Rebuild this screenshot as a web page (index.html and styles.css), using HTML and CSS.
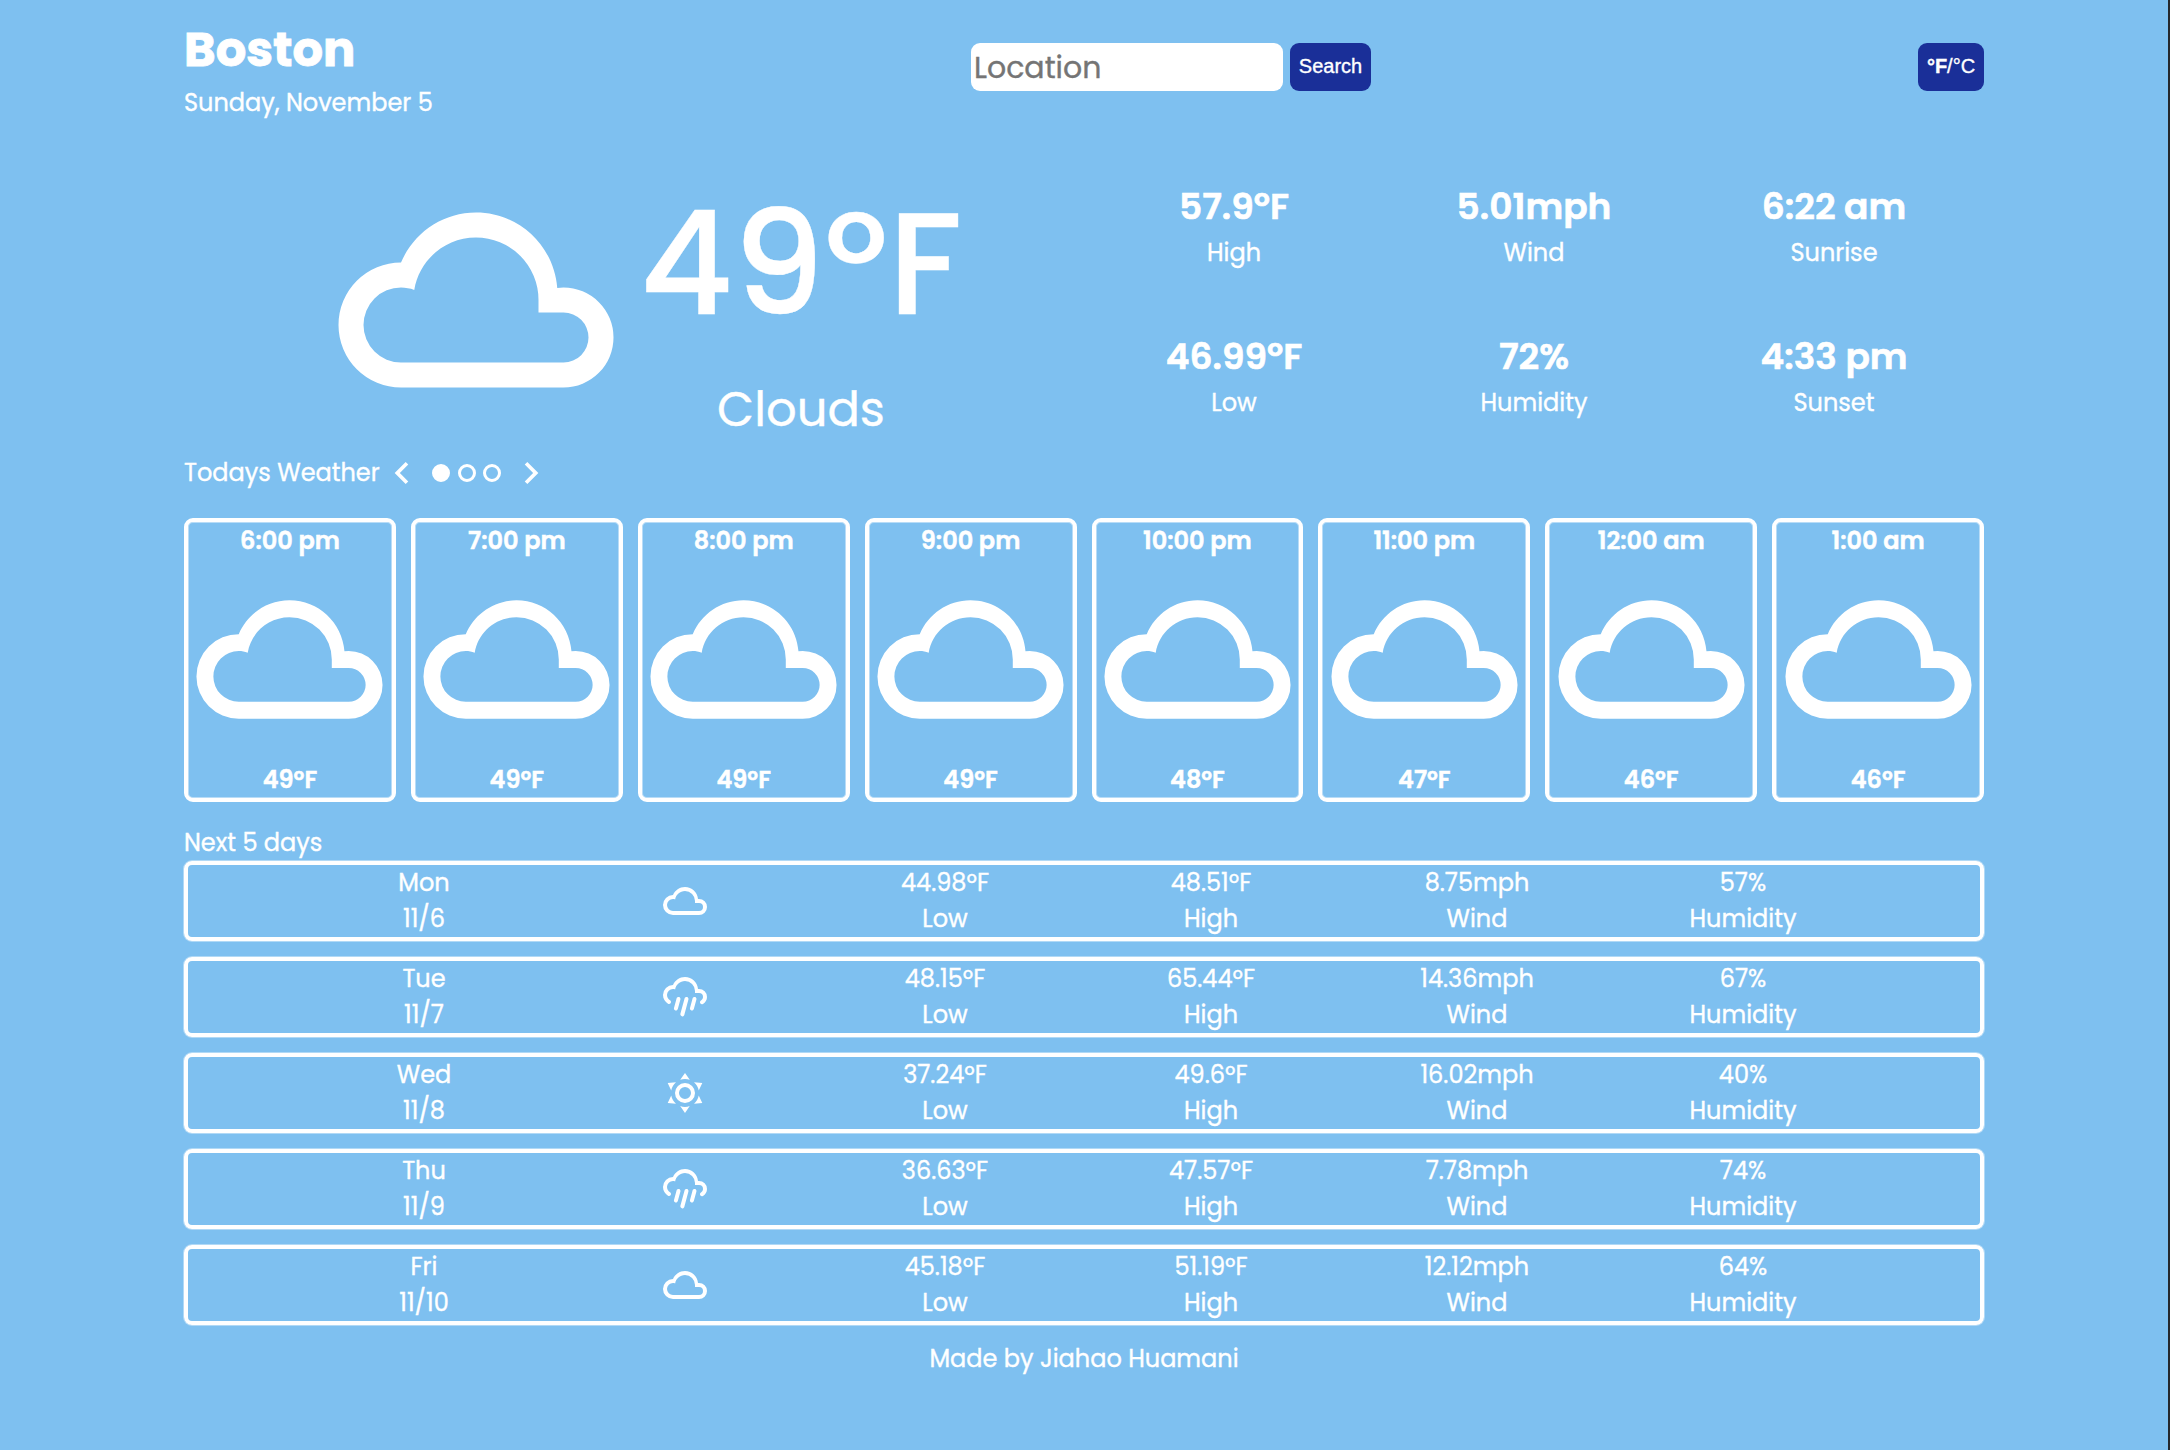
FILE: index.html
```html
<!DOCTYPE html>
<html lang="en">
<head>
<meta charset="utf-8">
<title>Weather</title>
<link rel="stylesheet" href="styles.css">
</head>
<body>
<svg class="sprite" aria-hidden="true">
  <symbol id="cloudy" viewBox="0 0 24 24"><path d="M6,19A5,5 0 0,1 1,14A5,5 0 0,1 6,9C7,6.65 9.3,5 12,5C15.43,5 18.24,7.66 18.5,11.03L19,11A4,4 0 0,1 23,15A4,4 0 0,1 19,19H6M19,13H17V12A5,5 0 0,0 12,7C9.5,7 7.45,8.82 7.06,11.19C6.73,11.07 6.37,11 6,11A3,3 0 0,0 3,14A3,3 0 0,0 6,17H19A2,2 0 0,0 21,15A2,2 0 0,0 19,13Z"/></symbol>
  <symbol id="sunny" viewBox="0 0 24 24"><path d="M12,7A5,5 0 0,1 17,12A5,5 0 0,1 12,17A5,5 0 0,1 7,12A5,5 0 0,1 12,7M12,9A3,3 0 0,0 9,12A3,3 0 0,0 12,15A3,3 0 0,0 15,12A3,3 0 0,0 12,9M12,2L14.39,5.42C13.65,5.15 12.84,5 12,5C11.16,5 10.35,5.15 9.61,5.42L12,2M3.34,7L7.5,6.65C6.9,7.16 6.36,7.78 5.94,8.5C5.5,9.24 5.25,10 5.11,10.79L3.34,7M3.36,17L5.12,13.23C5.26,14 5.53,14.78 5.95,15.5C6.37,16.24 6.91,16.86 7.5,17.37L3.36,17M20.65,7L18.88,10.79C18.74,10 18.47,9.23 18.05,8.5C17.63,7.78 17.1,7.15 16.5,6.64L20.65,7M20.64,17L16.5,17.36C17.09,16.85 17.62,16.22 18.04,15.5C18.46,14.77 18.73,14 18.87,13.21L20.64,17M12,22L9.59,18.56C10.33,18.83 11.14,19 12,19C12.82,19 13.63,18.83 14.37,18.56L12,22Z"/></symbol>
  <symbol id="pouring" viewBox="0 0 24 24"><path d="M9,12C9.53,12.14 9.85,12.69 9.71,13.22L8.41,18.05C8.27,18.59 7.72,18.9 7.19,18.76C6.65,18.62 6.34,18.07 6.5,17.54L7.78,12.71C7.92,12.17 8.47,11.86 9,12M13,12C13.53,12.14 13.85,12.69 13.71,13.22L11.64,20.95C11.5,21.5 10.95,21.8 10.41,21.66C9.88,21.5 9.56,20.97 9.7,20.43L11.78,12.71C11.92,12.17 12.47,11.86 13,12M17,12C17.53,12.14 17.85,12.69 17.71,13.22L16.41,18.05C16.27,18.59 15.72,18.9 15.19,18.76C14.65,18.62 14.34,18.07 14.5,17.54L15.78,12.71C15.92,12.17 16.47,11.86 17,12M17,10V9A5,5 0 0,0 12,4C9.5,4 7.45,5.82 7.06,8.19C6.73,8.07 6.37,8 6,8A3,3 0 0,0 3,11C3,12.11 3.6,13.08 4.5,13.6V13.59C5,13.87 5.14,14.5 4.87,14.96C4.59,15.43 4,15.6 3.5,15.32V15.33C2,14.47 1,12.85 1,11A5,5 0 0,1 6,6C7,3.65 9.3,2 12,2C15.43,2 18.24,4.66 18.5,8.03L19,8A4,4 0 0,1 23,12C23,13.5 22.2,14.77 21,15.46V15.46C20.5,15.73 19.91,15.57 19.63,15.09C19.36,14.61 19.5,14 20,13.72V13.72C20.6,13.37 21,12.73 21,12A2,2 0 0,0 19,10H17Z"/></symbol>
</svg>
<div class="page">
  <header class="header">
    <div class="place">
      <h1 class="city">Boston</h1>
      <p class="date">Sunday, November 5</p>
    </div>
    <form class="search">
      <input class="search-input" type="text" placeholder="Location">
      <button class="button" type="button">Search</button>
    </form>
    <button class="button unit" type="button"><b>°F</b>/°C</button>
  </header>

  <main>
    <section class="current">
      <div class="now">
        <svg class="now-icon"><use href="#cloudy"/></svg>
        <div class="now-text">
          <p class="now-temp">49ºF</p>
          <p class="now-sky">Clouds</p>
        </div>
      </div>
      <div class="stats">
        <div class="stat"><p class="stat-value">57.9ºF</p><p>High</p></div>
        <div class="stat"><p class="stat-value">5.01mph</p><p>Wind</p></div>
        <div class="stat"><p class="stat-value">6:22 am</p><p>Sunrise</p></div>
        <div class="stat"><p class="stat-value">46.99ºF</p><p>Low</p></div>
        <div class="stat"><p class="stat-value">72%</p><p>Humidity</p></div>
        <div class="stat"><p class="stat-value">4:33 pm</p><p>Sunset</p></div>
      </div>
    </section>

    <section class="today">
      <div class="today-bar">
        <h2 class="heading today-title">Todays Weather</h2>
        <svg class="chevron" viewBox="0 0 24 24"><path d="M15.41,16.58L10.83,12L15.41,7.41L14,6L8,12L14,18L15.41,16.58Z"/></svg>
        <div class="dots"><span class="dot dot-on"></span><span class="dot"></span><span class="dot"></span></div>
        <svg class="chevron" viewBox="0 0 24 24"><path d="M8.59,16.58L13.17,12L8.59,7.41L10,6L16,12L10,18L8.59,16.58Z"/></svg>
      </div>
      <div class="hours">
        <article class="hour"><p>6:00 pm</p><svg class="hour-icon"><use href="#cloudy"/></svg><p>49ºF</p></article>
        <article class="hour"><p>7:00 pm</p><svg class="hour-icon"><use href="#cloudy"/></svg><p>49ºF</p></article>
        <article class="hour"><p>8:00 pm</p><svg class="hour-icon"><use href="#cloudy"/></svg><p>49ºF</p></article>
        <article class="hour"><p>9:00 pm</p><svg class="hour-icon"><use href="#cloudy"/></svg><p>49ºF</p></article>
        <article class="hour"><p>10:00 pm</p><svg class="hour-icon"><use href="#cloudy"/></svg><p>48ºF</p></article>
        <article class="hour"><p>11:00 pm</p><svg class="hour-icon"><use href="#cloudy"/></svg><p>47ºF</p></article>
        <article class="hour"><p>12:00 am</p><svg class="hour-icon"><use href="#cloudy"/></svg><p>46ºF</p></article>
        <article class="hour"><p>1:00 am</p><svg class="hour-icon"><use href="#cloudy"/></svg><p>46ºF</p></article>
      </div>
    </section>

    <section class="week">
      <h2 class="heading">Next 5 days</h2>
      <div class="days">
        <article class="day">
          <div class="day-name"><p>Mon</p><p>11/6</p></div>
          <svg class="day-icon"><use href="#cloudy"/></svg>
          <div class="day-stats">
            <div><p>44.98ºF</p><p>Low</p></div><div><p>48.51ºF</p><p>High</p></div><div><p>8.75mph</p><p>Wind</p></div><div><p>57%</p><p>Humidity</p></div>
          </div>
        </article>
        <article class="day">
          <div class="day-name"><p>Tue</p><p>11/7</p></div>
          <svg class="day-icon"><use href="#pouring"/></svg>
          <div class="day-stats">
            <div><p>48.15ºF</p><p>Low</p></div><div><p>65.44ºF</p><p>High</p></div><div><p>14.36mph</p><p>Wind</p></div><div><p>67%</p><p>Humidity</p></div>
          </div>
        </article>
        <article class="day">
          <div class="day-name"><p>Wed</p><p>11/8</p></div>
          <svg class="day-icon"><use href="#sunny"/></svg>
          <div class="day-stats">
            <div><p>37.24ºF</p><p>Low</p></div><div><p>49.6ºF</p><p>High</p></div><div><p>16.02mph</p><p>Wind</p></div><div><p>40%</p><p>Humidity</p></div>
          </div>
        </article>
        <article class="day">
          <div class="day-name"><p>Thu</p><p>11/9</p></div>
          <svg class="day-icon"><use href="#pouring"/></svg>
          <div class="day-stats">
            <div><p>36.63ºF</p><p>Low</p></div><div><p>47.57ºF</p><p>High</p></div><div><p>7.78mph</p><p>Wind</p></div><div><p>74%</p><p>Humidity</p></div>
          </div>
        </article>
        <article class="day">
          <div class="day-name"><p>Fri</p><p>11/10</p></div>
          <svg class="day-icon"><use href="#cloudy"/></svg>
          <div class="day-stats">
            <div><p>45.18ºF</p><p>Low</p></div><div><p>51.19ºF</p><p>High</p></div><div><p>12.12mph</p><p>Wind</p></div><div><p>64%</p><p>Humidity</p></div>
          </div>
        </article>
      </div>
    </section>
  </main>
  <footer class="footer">Made by Jiahao Huamani</footer>
</div>
</body>
</html>
```
FILE: styles.css
```css
* {
  box-sizing: border-box;
  margin: 0;
  padding: 0;
}

body {
  min-height: 1450px;
  background: #7ec0f0;
  border-right: 2px solid #24282c;
  color: #fff;
  font: 400 24px/36px "Poppins", "Inter", "Open Sans", sans-serif;
  font-feature-settings: "cv11";
  -webkit-text-stroke: 0.35px currentColor;
  overflow: hidden;
}

svg {
  display: block;
  fill: currentColor;
}

.sprite {
  display: none;
}

.page {
  width: 1800px;
  margin: 0 auto;
  padding-top: 13px;
}

/* Header */
.header {
  display: grid;
  grid-template-columns: 787px 1fr auto;
  align-items: center;
  height: 108px;
}

.city {
  padding-top: 1px;
  font-size: 48px;
  font-weight: 700;
  line-height: 71px;
  -webkit-text-stroke-width: 0.8px;
}

.search {
  display: flex;
  gap: 7px;
}

.search-input {
  width: 312px;
  height: 48px;
  padding: 2px 3px 0;
  border: 0;
  border-radius: 9px;
  background: #fff;
  font: inherit;
  font-size: 30px;
  font-feature-settings: inherit;
}

.search-input::placeholder {
  color: #757575;
}

.button {
  width: 81px;
  height: 48px;
  padding-bottom: 2px;
  border: 0;
  border-radius: 9px;
  background: #1a2f98;
  color: #fff;
  font: 400 20px/24px "Liberation Sans", Arial, sans-serif;
}

.unit {
  width: 66px;
}

/* Current conditions */
.current {
  display: grid;
  grid-template-columns: 1fr 1fr;
  height: 300px;
  margin-top: 29px;
}

.now {
  display: flex;
  padding-left: 142px;
}

.now-icon {
  width: 300px;
  height: 300px;
}

.now-text {
  width: 350px;
  padding-top: 6px;
  text-align: center;
}

.now-temp {
  font-size: 144px;
  font-weight: 500;
  line-height: 216px;
}

.now-sky {
  padding-top: 2px;
  font-size: 48px;
  line-height: 72px;
}

.stats {
  display: grid;
  grid-template-columns: repeat(3, 1fr);
  grid-template-rows: 150px 150px;
}

.stat {
  padding-top: 30px;
  text-align: center;
}

.stat-value {
  margin-bottom: 1px;
  font-size: 36px;
  font-weight: 600;
  line-height: 54px;
  -webkit-text-stroke-width: 0.6px;
}

/* Hourly forecast */
.heading {
  font-size: 24px;
  font-weight: 400;
}

.today-bar {
  display: flex;
  align-items: center;
  height: 46px;
}

.today-title {
  width: 196px;
  white-space: nowrap;
}

.chevron {
  width: 44px;
  height: 44px;
}

.dots {
  display: flex;
  justify-content: center;
  gap: 7.5px;
  width: 85px;
}

.dot {
  width: 18px;
  height: 18px;
  border: 3px solid #fff;
  border-radius: 50%;
}

.dot-on {
  background: #fff;
}

.hours {
  display: grid;
  grid-template-columns: repeat(8, 1fr);
  gap: 15px;
  margin-top: 22px;
}

.hour {
  height: 284px;
  padding-top: 1px;
  border: 4px solid #fff;
  border-radius: 9px;
  box-shadow: inset 0 0 0 1px rgba(255, 255, 255, 0.45);
  font-weight: 600;
  text-align: center;
  -webkit-text-stroke-width: 0.5px;
}

.hour-icon {
  width: 203px;
  height: 203px;
  margin: -1px auto 1px;
}

/* Daily forecast */
.week {
  margin-top: 23px;
}

.days {
  display: grid;
  gap: 16px;
}

.day {
  display: flex;
  align-items: center;
  height: 80px;
  border: 4px solid #fff;
  border-radius: 8px;
  box-shadow: 0 0 0 1px rgba(255, 255, 255, 0.4);
  text-align: center;
}

.day-name {
  width: 472px;
}

.day-icon {
  width: 48px;
  height: 48px;
  margin-left: 1px;
}

.day-stats {
  display: grid;
  grid-template-columns: repeat(4, 266px);
  margin-left: 103px;
}

.footer {
  margin-top: 16px;
  text-align: center;
}
```
